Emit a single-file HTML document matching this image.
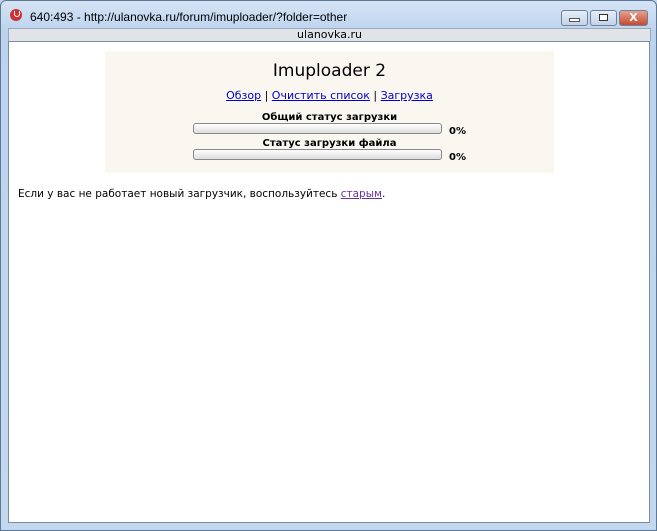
<!DOCTYPE html><html><head><style>
body{margin:0;width:657px;height:531px;overflow:hidden;background:#c3d8ef;font-family:"DejaVu Sans","Liberation Sans",sans-serif;position:relative}
.frame{position:absolute;left:0;top:0;width:655px;height:529px;border:1px solid #5f7891;border-radius:6px 6px 0 0;background:linear-gradient(#d5e4f5,#bcd3ee 30px,#c3d8ef)}
.title{position:absolute;left:30px;top:10px;font-size:12px;color:#000;font-family:"Liberation Sans",sans-serif}
.addr{position:absolute;left:8px;top:28px;width:641px;height:12px;background:#e0e3e8;font-size:11px;text-align:center;line-height:12px;border:1px solid #9aa9b9;border-bottom:none}
.content{position:absolute;left:8px;top:41px;width:640px;height:480px;background:#fff;border:1px solid #7c8ea3}
.box{position:absolute;left:96px;top:9px;width:449px;height:122px;background:#f9f7ef;text-align:center}
h1{font-weight:normal;font-size:17px;margin:0;position:absolute;top:10px;width:100%}
.links{position:absolute;top:38px;width:100%;font-size:11px}
a{color:#00c;}
.lbl{position:absolute;left:0;width:100%;font-size:10px;font-weight:bold}
.bar{position:absolute;left:88px;width:247px;height:9px;border:1px solid #888;border-radius:3px;background:linear-gradient(#fff,#ddd)}
.pct{position:absolute;left:344px;font-size:10px;font-weight:bold}
.note{position:absolute;left:9px;top:146px;font-size:10.5px}
.btn{position:absolute;top:10px;height:14px;border:1px solid #6d819a;border-radius:3px;background:linear-gradient(#e6eef8,#c0d2ea)}
</style></head><body>
<div class="frame"></div>
<div style="position:absolute;left:10px;top:9px;width:12px;height:12px;border-radius:50%;background:#c33"></div>
<div style="position:absolute;left:14px;top:11px;width:4px;height:5px;border:1px solid #fff;border-top:none;border-radius:0 0 3px 3px"></div>
<div class="title">640:493 - http://ulanovka.ru/forum/imuploader/?folder=other</div>
<div class="btn" style="left:561px;width:25px"><div style="margin:7px auto;width:9px;height:2px;background:#fff;border:1px solid #555"></div></div>
<div class="btn" style="left:590px;width:25px"><div style="margin:3px auto;width:7px;height:5px;border:1px solid #333;background:#fff"></div></div>
<div class="btn" style="left:619px;width:27px;background:linear-gradient(#e9a08d,#c44a2f);color:#fff;font-weight:bold;font-size:11px;text-align:center;line-height:14px">X</div>
<div class="addr">ulanovka.ru</div>
<div class="content">
<div class="box">
<h1>Imuploader 2</h1>
<div class="links"><a href="#">Обзор</a> | <a href="#">Очистить список</a> | <a href="#">Загрузка</a></div>
<div class="lbl" style="top:61px">Общий статус загрузки</div>
<div class="bar" style="top:72px"></div><div class="pct" style="top:75px">0%</div>
<div class="lbl" style="top:87px">Статус загрузки файла</div>
<div class="bar" style="top:98px"></div><div class="pct" style="top:101px">0%</div>
</div>
<div class="note">Если у вас не работает новый загрузчик, воспользуйтесь <a href="#" style="color:#639">старым</a>.</div>
</div>
</body></html>
